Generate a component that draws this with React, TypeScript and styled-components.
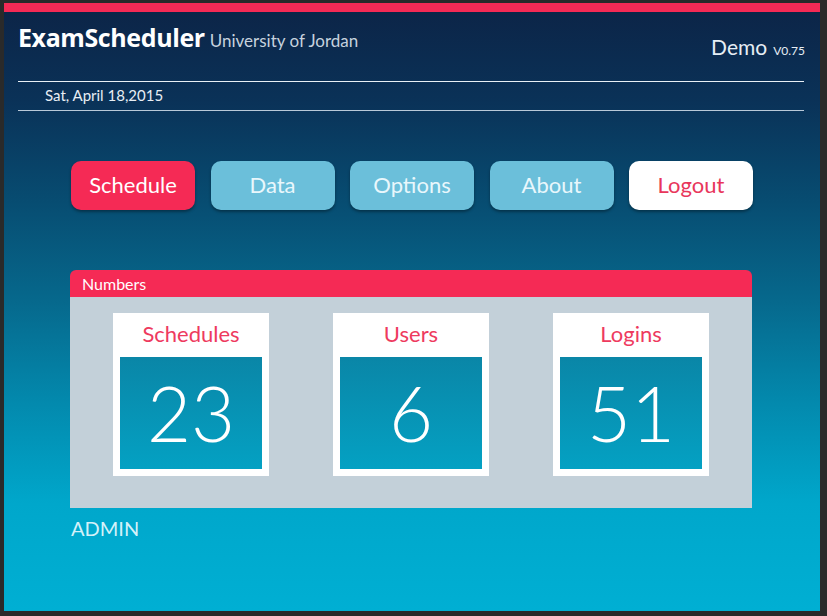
import React from "react";
import styled, { createGlobalStyle } from "styled-components";

const Global = createGlobalStyle`
  html, body { margin: 0; padding: 0; background: #2a2a2a; }
  body { font-family: "Lato", "Open Sans", sans-serif; }
  * { box-sizing: border-box; }
`;

const Frame = styled.div`
  width: 827px;
  height: 616px;
  padding: 3px 7px 5px 4px;
  background: #2a2a2a;
`;

const Screen = styled.div`
  width: 816px;
  height: 608px;
  border-top: 9px solid #f52a55;
  background: linear-gradient(
    to bottom,
    #0c2548 0%,
    #0a3258 15%,
    #074d72 32%,
    #06688c 48%,
    #0389ad 65%,
    #00a7cb 82%,
    #00afd3 100%
  );
  display: flex;
  flex-direction: column;
`;

const TitleRow = styled.header`
  height: 69px;
  display: flex;
  justify-content: space-between;
  align-items: flex-start;
  padding: 0 15px 0 14px;
`;

const Brand = styled.div`
  margin-top: 8px;
  display: flex;
  align-items: baseline;
  gap: 5px;
`;

const BrandName = styled.span`
  font-family: "Open Sans", sans-serif;
  font-weight: 700;
  font-size: 25px;
  letter-spacing: -0.4px;
  color: #ffffff;
`;

const BrandSub = styled.span`
  font-family: "Lato", sans-serif;
  font-size: 17px;
  color: #c6d2de;
`;

const Version = styled.div`
  margin-top: 22px;
  display: flex;
  align-items: baseline;
  gap: 6px;
  color: #e6eef5;
`;

const VersionMain = styled.span`
  font-size: 21px;
`;

const VersionNum = styled.span`
  font-size: 12px;
`;

const DateBar = styled.div`
  margin: 0 16px 0 14px;
  height: 30px;
  border-top: 1px solid #e9f0f6;
  border-bottom: 1px solid #b9c9d8;
  display: flex;
  align-items: center;
  padding-left: 27px;
  padding-bottom: 2px;
  font-size: 15px;
  color: #e8eef4;
`;

const Nav = styled.nav`
  margin-top: 50px;
  padding-left: 67px;
  display: flex;
  gap: 15.5px;
`;

const NavButton = styled.button<{ $variant: "active" | "normal" | "light" }>`
  width: 124px;
  height: 49px;
  border: none;
  border-radius: 10px;
  font-family: "Lato", sans-serif;
  font-size: 22px;
  font-weight: 400;
  padding: 0 0 2px;
  box-shadow: 0 2px 3px rgba(0, 0, 0, 0.35);
  background: ${(p) =>
    p.$variant === "active" ? "#f52a55" : p.$variant === "light" ? "#ffffff" : "#6bbfda"};
  color: ${(p) =>
    p.$variant === "active" ? "#ffffff" : p.$variant === "light" ? "#e8365b" : "#e9f7fc"};
  cursor: pointer;
`;

const Panel = styled.section`
  margin-top: 60px;
  margin-left: 66px;
  width: 682px;
`;

const PanelHead = styled.div`
  height: 27px;
  background: #f52a55;
  border-radius: 6px 6px 0 0;
  color: #ffffff;
  font-size: 16px;
  display: flex;
  align-items: center;
  padding-left: 12px;
`;

const PanelBody = styled.div`
  height: 211px;
  background: #c3d0d9;
  display: flex;
  gap: 64px;
  padding: 16px 0 0 43px;
`;

const Card = styled.div`
  width: 156px;
  height: 163px;
  background: #ffffff;
  padding: 0 7px 7px 7px;
  display: flex;
  flex-direction: column;
`;

const CardLabel = styled.div`
  height: 44px;
  display: flex;
  align-items: center;
  justify-content: center;
  color: #ee3a5e;
  font-size: 22px;
  padding-bottom: 4px;
`;

const CardValue = styled.div`
  flex: 1;
  background: linear-gradient(to bottom, #0a86a7 0%, #04a1c3 100%);
  display: flex;
  align-items: center;
  justify-content: center;
  color: #ffffff;
  font-size: 76px;
  font-weight: 300;
  line-height: 1;
`;

const Footer = styled.div`
  margin-top: 8px;
  margin-left: 67px;
  font-size: 20px;
  color: #d4f1f9;
`;

const stats = [
  { label: "Schedules", value: "23" },
  { label: "Users", value: "6" },
  { label: "Logins", value: "51" },
];

export default function App() {
  return (
    <>
      <Global />
      <Frame>
        <Screen>
          <TitleRow>
            <Brand>
              <BrandName>ExamScheduler</BrandName>
              <BrandSub>University of Jordan</BrandSub>
            </Brand>
            <Version>
              <VersionMain>Demo</VersionMain>
              <VersionNum>V0.75</VersionNum>
            </Version>
          </TitleRow>
          <DateBar>Sat, April 18,2015</DateBar>
          <Nav>
            <NavButton $variant="active">Schedule</NavButton>
            <NavButton $variant="normal">Data</NavButton>
            <NavButton $variant="normal">Options</NavButton>
            <NavButton $variant="normal">About</NavButton>
            <NavButton $variant="light">Logout</NavButton>
          </Nav>
          <Panel>
            <PanelHead>Numbers</PanelHead>
            <PanelBody>
              {stats.map((s) => (
                <Card key={s.label}>
                  <CardLabel>{s.label}</CardLabel>
                  <CardValue>{s.value}</CardValue>
                </Card>
              ))}
            </PanelBody>
          </Panel>
          <Footer>ADMIN</Footer>
        </Screen>
      </Frame>
    </>
  );
}
